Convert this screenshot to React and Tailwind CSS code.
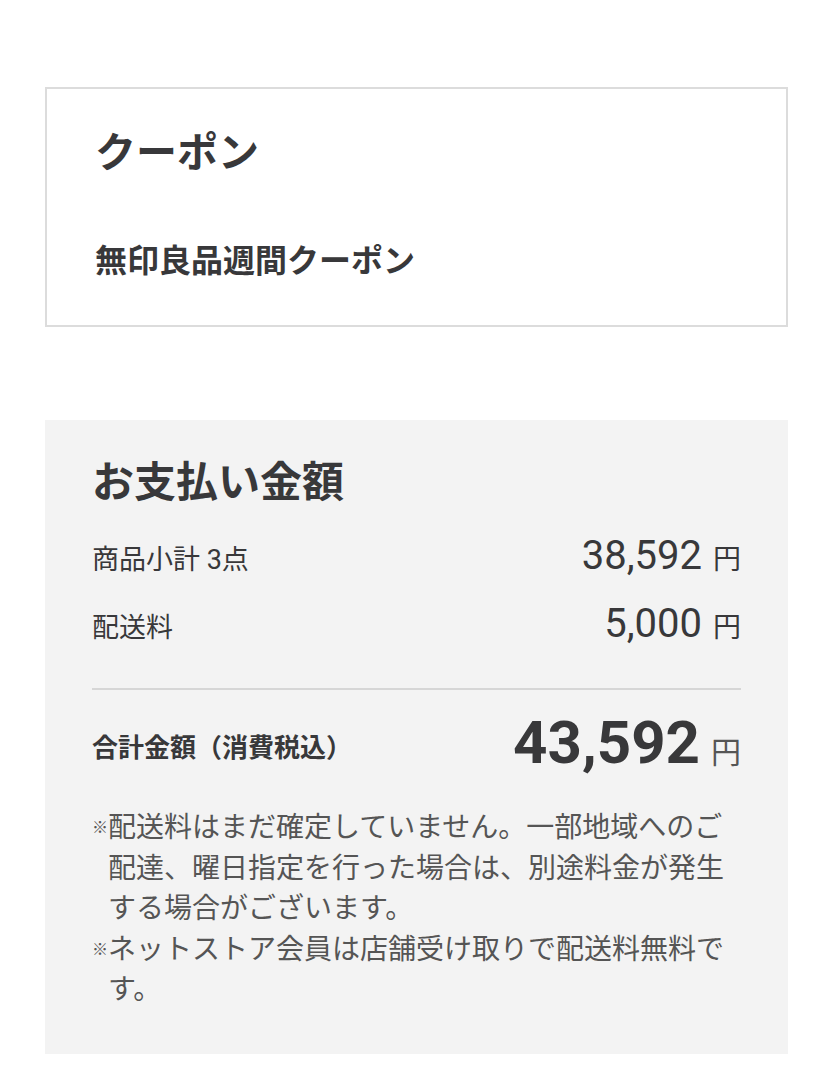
export default function App() {
  return (
    <div className="min-h-[1080px] bg-white pt-[87px] font-['Roboto','Noto_Sans_CJK_JP',sans-serif] text-[#38383a]">
      {/* Coupon */}
      <section className="mx-[45px] border-2 border-[#dcdcdc] bg-white px-[48px] pt-[40px] pb-[44px]">
        <h2 className="text-[41px] font-bold leading-[48px]">クーポン</h2>
        <p className="mt-[64px] text-[32px] font-bold leading-[40px]">無印良品週間クーポン</p>
      </section>

      {/* Payment summary */}
      <section className="mx-[45px] mt-[93px] bg-[#f3f3f3] px-[47px] pt-[38px] pb-[43px]">
        <h2 className="text-[42px] font-bold leading-[50px]">お支払い金額</h2>

        <div className="mt-[24px] flex items-baseline justify-between leading-[48px]">
          <span className="text-[27px]">商品小計 3点</span>
          <span className="flex items-baseline gap-[11px]">
            <span className="text-[40px]">38,592</span>
            <span className="text-[28px]">円</span>
          </span>
        </div>
        <div className="mt-[16px] flex items-baseline justify-between leading-[48px]">
          <span className="text-[27px]">配送料</span>
          <span className="flex items-baseline gap-[11px]">
            <span className="text-[40px]">5,000</span>
            <span className="text-[28px]">円</span>
          </span>
        </div>

        <div className="mt-[36px] h-[2px] bg-[#d6d6d6]" />

        <div className="mt-[21px] flex items-center justify-between">
          <span className="text-[26px] font-bold leading-[40px]">合計金額（消費税込）</span>
          <span className="flex items-baseline gap-[11px] leading-[64px]">
            <span className="text-[60px] font-bold">43,592</span>
            <span className="text-[30px] text-[#555]">円</span>
          </span>
        </div>

        <div className="mt-[23px] text-[28px] leading-[40.5px] text-[#555]">
          <p className="flex">
            <span className="w-[16px] shrink-0 text-[16px]">※</span>
            <span>配送料はまだ確定していません。一部地域へのご配達、曜日指定を行った場合は、別途料金が発生する場合がございます。</span>
          </p>
          <p className="flex">
            <span className="w-[16px] shrink-0 text-[16px]">※</span>
            <span>ネットストア会員は店舗受け取りで配送料無料です。</span>
          </p>
        </div>
      </section>
    </div>
  )
}
